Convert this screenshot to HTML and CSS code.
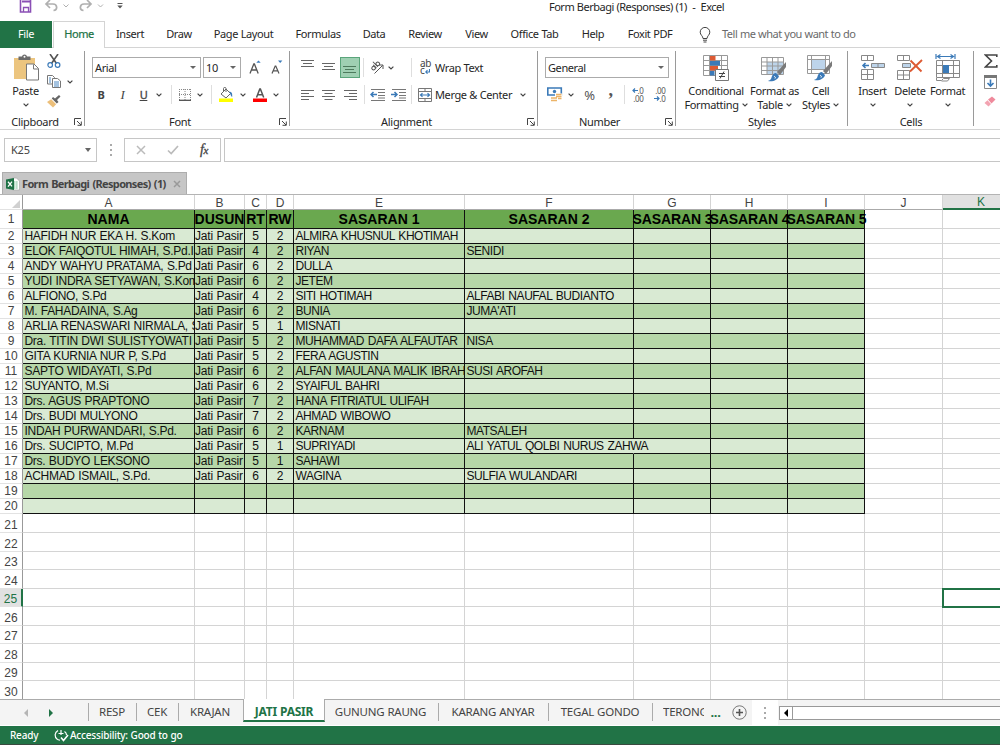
FILE: index.html
```html
<!DOCTYPE html>
<html lang="en">
<head>
  <meta charset="UTF-8" />
  <title>Form Berbagi (Responses) (1) - Excel</title>
  <link rel="stylesheet" href="styles.css">
</head>
<body>

  <!-- shared icons -->
  <svg class="defs" width="0" height="0">
    <symbol id="chev" viewBox="0 0 6 4"><path d="M.6 .6 3 3 5.4 .6" fill="none" stroke="#444" stroke-width="1.2"/></symbol>
    <symbol id="launch" viewBox="0 0 8 8"><path d="M.5 7V.5H7M3 3l4 4M7.3 3.5v3.8H3.5" fill="none" stroke="#444"/></symbol>
    <symbol id="brush" viewBox="0 0 20 20"><path d="M19 0v5l-6 8-3-3z" fill="#7a7a7a"/><path d="M9 11l3 3c-1 4-6 6-11 5 3-1 3-2 4-5 1-2 2-3 4-3z" fill="#3b7ab8"/><path d="M7 14.500c1 0 2 1 1 2" fill="none" stroke="#fff"/></symbol>
  </svg>

  <div class="titlebar">
    <svg class="quick" width="130" height="14" viewBox="0 0 130 14" fill="none">
      <path d="M20.500 0V12h10V0" stroke="#8a4fb5" stroke-width="1.600"/><path d="M22 1.500h8" stroke="#8a4fb5" stroke-width="2"/><path d="M23.500 12V7.500h5V12" stroke="#8a4fb5" stroke-width="1.300"/>
      <path d="M46 4h7c4.500 0 5 6 .5 6.500M50 0l-4 4 4 4" stroke="#b0b0b0" stroke-width="1.700"/>
      <path d="M63.500 4.500l2.500 2.500 2.500-2.500" stroke="#b0b0b0"/>
      <path d="M91 4h-7c-4.500 0-5 6-.5 6.500M87 0l4 4-4 4" stroke="#b0b0b0" stroke-width="1.700"/>
      <path d="M98 4.500l2.500 2.500 2.500-2.500" stroke="#b0b0b0"/>
      <path d="M117.500 3.500h5" stroke="#555"/><path d="M117.300 5.500h5.400L120 8.500z" fill="#555"/>
    </svg>
    <span class="window-title">Form Berbagi (Responses) (1)&nbsp; -&nbsp; Excel</span>
  </div>

  <div class="tabs">
    <span class="file">File</span>
    <span></span>
    <span class="home">Home</span>
    <span>Insert</span>
    <span>Draw</span>
    <span>Page Layout</span>
    <span>Formulas</span>
    <span>Data</span>
    <span>Review</span>
    <span>View</span>
    <span>Office Tab</span>
    <span>Help</span>
    <span>Foxit PDF</span>
    <span class="bulb"><svg width="12" height="16" viewBox="0 0 12 16" fill="none" stroke="#444"><path d="M4 11.500C4 9 1.200 8 1.200 5.200a4.600 4.600 0 0 1 9.600 0C10.800 8 8 9 8 11.500zM4 13.200h4M4.500 15h3"/></svg></span>
    <span class="tellme">Tell me what you want to do</span>
  </div>

  <div class="ribbon">
    <div class="group clipboard">
      <div class="tools">
        <div class="big paste">
          <svg width="26" height="28" viewBox="0 0 26 28"><path d="M0 4h21v21H0z" fill="#ecc57f"/><path d="M4.500 6V2.500h3.500C8.500-.2 12.500-.2 13 2.500h3.500V6z" fill="#6b6b6b"/><circle cx="10.500" cy="2.700" r="1" fill="#fff"/><path d="M12.500 10h7.500l4.500 4.500V26h-12z" fill="#fff" stroke="#777"/><path d="M19.500 10.500V15h5" fill="none" stroke="#777"/></svg>
          <span>Paste</span>
          <svg class="chev"><use href="#chev"/></svg>
        </div>
        <div class="stack">
          <svg width="14" height="14" viewBox="0 0 14 14" fill="none"><path d="M3 0l6.500 9.500M11 0L4.500 9.500" stroke="#555" stroke-width="1.600"/><circle cx="3.200" cy="11" r="2.300" stroke="#3b7ab8" stroke-width="1.200"/><circle cx="10.600" cy="11" r="2.300" stroke="#3b7ab8" stroke-width="1.200"/></svg>
          <span class="pair"><svg width="14" height="13" viewBox="0 0 14 13" fill="#fff" stroke="#777"><path d="M.5 .5h5l2 2V9h-7z"/><path d="M5.500 3.500h5l3 2.500v6.500h-8z"/><path d="M2 3h2M2 5h2M2 7h2M7 7h5M7 9h5M7 11h5" stroke="#4a86c0"/></svg>
          <svg class="chev"><use href="#chev"/></svg></span>
          <svg width="14" height="13" viewBox="0 0 14 13"><path d="M13.500 1.500L12 0 8 3.500 6 2 4.800 3.500l5 5L11.500 7 10 5z" fill="#666"/><path d="M4.200 4.200l5 5L6 12.500 0 7z" fill="#ecbf7a"/></svg>
        </div>
      </div>
      <div class="label">Clipboard</div>
      <svg class="launch"><use href="#launch"/></svg>
    </div>

    <div class="group font">
      <div class="font-row1">
        <div class="combo">Arial<i></i></div>
        <div class="combo">10<i></i></div>
        <svg width="12" height="15" viewBox="0 0 12 15"><path d="M1 13.500L4.800 4h.6l3.800 9.500M2.400 10h5.400" fill="none" stroke="#555" stroke-width="1.300"/><path d="M7.300 2.800L9.500 .4l2.200 2.400z" fill="#3b7ab8"/></svg>
        <svg width="12" height="15" viewBox="0 0 12 15"><path d="M1 13.500L4.200 6h.6l3.200 7.500M2.200 10.800h4.600" fill="none" stroke="#555" stroke-width="1.200"/><path d="M7 .5h4.400L9.200 2.900z" fill="#3b7ab8"/></svg>
      </div>
      <div class="font-row2">
        <b>B</b><i>I</i><u>U</u>
        <svg class="chev"><use href="#chev"/></svg>
        <span class="sep"></span>
        <svg width="12" height="12" viewBox="0 0 12 12" fill="none" stroke="#888"><path d="M.5 0v11M6 0v11M11.500 0v11M0 .5h12M0 5.500h12" stroke-dasharray="1 1"/><path d="M0 11.300h12" stroke="#444" stroke-width="1.200"/></svg>
        <svg class="chev"><use href="#chev"/></svg>
        <span class="sep"></span>
        <svg width="14" height="15" viewBox="0 0 14 15"><path d="M2 7l5-5 4.500 4.500L7 11z" fill="#fff" stroke="#666"/><path d="M4.500 5V1.500c0-1.500 2.500-1.500 2.500 0V5" fill="none" stroke="#666"/><path d="M10 4.500c3 .2 3.500 2 3.200 5.500-1.500-.5-1.500-3-3.200-5.500z" fill="#3b7ab8"/><path d="M0 11.500h14V15H0z" fill="#ff0"/></svg>
        <svg class="chev"><use href="#chev"/></svg>
        <svg width="14" height="15" viewBox="0 0 14 15"><path d="M3.500 10.500L6.800 2h.6l3.300 8.500M4.800 7.700h4.600" fill="none" stroke="#555" stroke-width="1.500"/><path d="M0 11.500h14V15H0z" fill="#f00"/></svg>
        <svg class="chev"><use href="#chev"/></svg>
      </div>
      <div class="label">Font</div>
      <svg class="launch"><use href="#launch"/></svg>
    </div>

    <div class="group alignment">
      <div class="align-row">
        <svg width="13" height="15" viewBox="0 0 13 15"><path d="M0 .5h13M2 3.500h9M0 6.500h13" stroke="#666"/></svg>
        <svg width="13" height="11" viewBox="0 0 13 11"><path d="M0 1.500h13M2 4.500h9M0 7.500h13" stroke="#666"/></svg>
        <span class="pressed"><svg width="13" height="11" viewBox="0 0 13 11"><path d="M0 4.500h13M2 7.500h9M0 10.500h13" stroke="#4d7a5d"/></svg></span>
        <span class="sep"></span>
        <svg width="14" height="13" viewBox="0 0 14 13" fill="none" stroke="#555"><g transform="rotate(-45 5 5)"><circle cx="2.500" cy="5.500" r="1.800"/><path d="M4.500 3v4.500M6.500 .5v7"/><circle cx="8.400" cy="5.500" r="1.800"/></g><path d="M4.500 12.500l8-8M9 4h4v4"/></svg>
        <svg class="chev"><use href="#chev"/></svg>
        <span class="sep sep-wrap"></span>
        <span class="with-text"><span class="abc"><span>ab</span><span>c<svg width="5" height="5" viewBox="0 0 5 5"><path d="M4.500 0v3H1M2.500 1L.8 3l1.700 1.700" fill="none" stroke="#3b7ab8" stroke-width="1.100"/></svg></span></span><span>Wrap Text</span></span>
      </div>
      <div class="align-row second">
        <svg width="13" height="10" viewBox="0 0 13 10"><path d="M0 .5h13M0 3.500h8M0 6.500h13M0 9.500h8" stroke="#666"/></svg>
        <svg width="13" height="10" viewBox="0 0 13 10"><path d="M0 .5h13M2.500 3.500h8M0 6.500h13M2.500 9.500h8" stroke="#666"/></svg>
        <svg width="13" height="10" viewBox="0 0 13 10"><path d="M0 .5h13M5 3.500h8M0 6.500h13M5 9.500h8" stroke="#666"/></svg>
        <span class="sep"></span>
        <svg width="15" height="12" viewBox="0 0 15 12"><path d="M1 .5h14M8 3.500h7M8 6.500h7M1 11.500h14M8 9h7" stroke="#777"/><path d="M7 5.500H1M3.500 3L1 5.500 3.500 8" fill="none" stroke="#3b7ab8" stroke-width="1.500"/></svg>
        <svg width="15" height="12" viewBox="0 0 15 12"><path d="M1 .5h14M8 3.500h7M8 6.500h7M1 11.500h14M8 9h7" stroke="#777"/><path d="M0 5.500h6M3.500 3L6 5.500 3.500 8" fill="none" stroke="#3b7ab8" stroke-width="1.500"/></svg>
        <span class="sep sep-merge"></span>
        <span class="with-text"><svg width="14" height="14" viewBox="0 0 14 14" fill="none" stroke="#777"><path d="M.5 .5h13v13H.5zM0 3.500h14M0 10.500h14M7 0v3M7 11v3"/><path d="M3 7h8M4.500 5.300L2.500 7l2 1.700M9.500 5.300l2 1.700-2 1.700" stroke="#3b7ab8" stroke-width="1.200"/></svg><span>Merge &amp; Center</span></span>
        <svg class="chev"><use href="#chev"/></svg>
      </div>
      <div class="label">Alignment</div>
      <svg class="launch"><use href="#launch"/></svg>
    </div>

    <div class="group number">
      <div class="combo">General<i></i></div>
      <div class="number-row">
        <svg width="16" height="15" viewBox="0 0 16 15"><path d="M.8 1h13.500v7H.8z" fill="#fff" stroke="#3b7ab8" stroke-width="1.600"/><circle cx="7.500" cy="4.500" r="1.700" fill="#3b7ab8"/><path d="M8 6.500h7V15H3V10h5z" fill="#fff"/><path d="M9 7.500h5.500M9 9.500h5.500M4 11h6M4 13.500h6M11 11.500h3.500" stroke="#ecb468" stroke-width="1.300"/></svg>
        <svg class="chev"><use href="#chev"/></svg>
        <span class="pct">%</span>
        <span class="comma">,</span>
        <span class="sep"></span>
        <span class="dec"><span><svg width="6" height="5" viewBox="0 0 6 5"><path d="M6 2.500H1M3 .5l-2 2 2 2" fill="none" stroke="#3b7ab8" stroke-width="1.200"/></svg>.0</span><span>.00</span></span>
        <span class="dec"><span>.00</span><span><svg width="6" height="5" viewBox="0 0 6 5"><path d="M0 2.500h5M3 .5l2 2-2 2" fill="none" stroke="#3b7ab8" stroke-width="1.200"/></svg>.0</span></span>
      </div>
      <div class="label">Number</div>
      <svg class="launch"><use href="#launch"/></svg>
    </div>

    <div class="group styles">
      <div class="tools">
        <div class="big">
          <svg width="27" height="28" viewBox="0 0 27 28"><path d="M.5 1.500h24v20H.5z" fill="#fff" stroke="#999"/><path d="M0 6.500h25M0 11.500h25M0 16.500h25M6.500 1v21M18.500 1v21" stroke="#999"/><path d="M7 2h5.500v4.500H7zM7 12h8v4.500H7z" fill="#dd5a33"/><path d="M7 7h10v4.500H7zM7 17h4.500v4.500H7z" fill="#3b7ab8"/><path d="M12.500 15.500h13v11h-13z" fill="#fff" stroke="#777"/><path d="M16 19.500h6M16 22.500h6M21 17.500l-4 7" stroke="#444"/></svg>
          <span>Conditional</span>
          <span>Formatting <svg class="chev"><use href="#chev"/></svg></span>
        </div>
        <div class="big">
          <svg width="27" height="28" viewBox="0 0 27 28"><path d="M.5 3.500h22v17H.5z" fill="#fff" stroke="#999"/><path d="M6 8h16v12H6z" fill="#bdd4ea"/><path d="M0 8h23M0 12h23M0 16.500h23M6 3v18M11.500 3v18M17 3v18" stroke="#999"/><use href="#brush" x="6" y="8" width="20" height="20"/></svg>
          <span>Format as</span>
          <span>Table <svg class="chev"><use href="#chev"/></svg></span>
        </div>
        <div class="big">
          <svg width="27" height="28" viewBox="0 0 27 28"><path d="M.5 1.500h22v18H.5z" fill="#fff" stroke="#999"/><path d="M5 6h13v9H5z" fill="#bdd4ea"/><path d="M0 5.500h23M0 15.500h23M4.500 1v19M18.500 1v19" stroke="#999"/><use href="#brush" x="6" y="7" width="20" height="20"/></svg>
          <span>Cell</span>
          <span>Styles <svg class="chev"><use href="#chev"/></svg></span>
        </div>
      </div>
      <div class="label">Styles</div>
    </div>

    <div class="group cells">
      <div class="tools">
        <div class="big">
          <svg width="24" height="28" viewBox="0 0 24 28" fill="#fff" stroke="#888"><path d="M.5 1.500h12v5H.5zM6.500 1.500v5M.5 15.500h12v10H.5zM.5 20.500h12M6.500 15.500v10"/><path d="M10.500 9.500h13v4h-13zM17 9v4" fill="#bdd4ea"/><path d="M8 11.500H2M4.500 9L2 11.500 4.500 14" fill="none" stroke="#3b7ab8" stroke-width="1.600"/></svg>
          <span>Insert</span>
          <svg class="chev"><use href="#chev"/></svg>
        </div>
        <div class="big">
          <svg width="26" height="28" viewBox="0 0 26 28" fill="#fff" stroke="#888"><path d="M.5 1.500h12v5H.5zM6.500 1.500v5M.5 16.500h12v9H.5zM.5 21h12M6.500 16.500v9"/><path d="M5.500 9.500h8v4h-8z" fill="#bdd4ea"/><path d="M13.500 6.500l11 11M25 6L13 17.500" fill="none" stroke="#dd5a33" stroke-width="1.900"/></svg>
          <span>Delete</span>
          <svg class="chev"><use href="#chev"/></svg>
        </div>
        <div class="big">
          <svg width="26" height="28" viewBox="0 0 26 28" fill="#fff" stroke="#888"><path d="M1.500 6.500h23v17h-23zM1 11.500h24M1 19.500h24M7.500 6v18M18.500 6v18"/><path d="M8 11h6v8H8z" fill="#3b7ab8" stroke="none"/><path d="M1.500 24v2.500h5l2-2h6l-2 2.500h-6"/><path d="M1 0v5M20 0v5M3 2.500h15M5.500 .5l-3 2 3 2M15.500 .5l3 2-3 2" fill="none" stroke="#3b7ab8" stroke-width="1.200"/></svg>
          <span>Format</span>
          <svg class="chev"><use href="#chev"/></svg>
        </div>
      </div>
      <div class="label">Cells</div>
    </div>

    <div class="group editing">
      <svg width="14" height="14" viewBox="0 0 14 14"><path d="M12.800 3V1H1.500l6 6-6 6h11.300v-2" fill="none" stroke="#444" stroke-width="1.600"/></svg>
      <svg width="13" height="14" viewBox="0 0 13 14"><path d="M.5 .5h12v13H.5z" fill="#fff" stroke="#888"/><path d="M0 0h13v3H0z" fill="#777"/><path d="M6.500 4.500V11M3.500 8l3 3 3-3" fill="none" stroke="#3b7ab8" stroke-width="1.600"/></svg>
      <svg width="12" height="11" viewBox="0 0 12 11"><path d="M4 3.500L8 .5l3.500 3-4 4z" fill="#ef8a9c"/><path d="M3.500 4.200L7 8l-2.500 2.500L.5 7z" fill="#f3a3b1"/></svg>
    </div>
  </div>

  <div class="formula-bar">
    <div class="name-box">K25<i></i></div>
    <div class="dots"><i></i><i></i><i></i></div>
    <div class="fx-box">
      <svg width="10" height="10" viewBox="0 0 10 10"><path d="M1 1l8 8M9 1L1 9" stroke="#bbb" stroke-width="1.500"/></svg>
      <svg width="12" height="10" viewBox="0 0 12 10"><path d="M1 5.500L4.200 8.500 11 1" fill="none" stroke="#bbb" stroke-width="1.700"/></svg>
      <span class="fx">f<small>x</small></span>
    </div>
    <div class="input"></div>
  </div>

  <div class="doc-tab">
    <svg width="14" height="14" viewBox="0 0 14 14"><path d="M6.500 1h4l3 3v9h-7z" fill="#fff" stroke="#aaa" stroke-width=".7"/><path d="M8 5h4M8 7h4M8 9h4M8 11h4" stroke="#6db58a" stroke-dasharray="1.500 .6"/><path d="M0 2.500L8 1v12l-8-1.500z" fill="#1e7145"/><path d="M2 4.800l4 4.600M6 4.600L2 9.600" stroke="#fff" stroke-width="1.300"/></svg>
    <span>Form Berbagi (Responses) (1)</span>
    <svg width="8" height="8" viewBox="0 0 8 8"><path d="M1 1l6 6M7 1L1 7" stroke="#999" stroke-width="1.500"/></svg>
  </div>

  <table class="sheet">
    <colgroup><col class="n"><col class="a"><col class="b"><col class="c"><col class="d"><col class="e"><col class="f"><col class="g"><col class="g"><col class="g"><col class="j"><col class="k"></colgroup>
    <tr class="letters"><th class="corner"><svg width="8" height="8" viewBox="0 0 8 8"><path d="M8 0v8H0z" fill="#d0d0d0"/></svg></th><th>A</th><th>B</th><th>C</th><th>D</th><th>E</th><th>F</th><th>G</th><th>H</th><th>I</th><th>J</th><th class="current">K</th></tr>
    <tr class="head"><th>1</th><td><p>NAMA</p></td><td><p>DUSUN</p></td><td><p>RT</p></td><td><p>RW</p></td><td><p>SASARAN 1</p></td><td><p>SASARAN 2</p></td><td><p>SASARAN 3</p></td><td><p>SASARAN 4</p></td><td><p>SASARAN 5</p></td><td></td><td></td></tr>
    <tr class="light"><th>2</th><td>HAFIDH NUR EKA H. S.Kom</td><td>Jati Pasir</td><td>5</td><td>2</td><td>ALMIRA KHUSNUL KHOTIMAH</td><td></td><td></td><td></td><td></td><td></td><td></td></tr>
    <tr class="dark"><th>3</th><td>ELOK FAIQOTUL HIMAH, S.Pd.I</td><td>Jati Pasir</td><td>4</td><td>2</td><td>RIYAN</td><td>SENIDI</td><td></td><td></td><td></td><td></td><td></td></tr>
    <tr class="light"><th>4</th><td>ANDY WAHYU PRATAMA, S.Pd</td><td>Jati Pasir</td><td>6</td><td>2</td><td>DULLA</td><td></td><td></td><td></td><td></td><td></td><td></td></tr>
    <tr class="dark"><th>5</th><td>YUDI INDRA SETYAWAN, S.Kom</td><td>Jati Pasir</td><td>6</td><td>2</td><td>JETEM</td><td></td><td></td><td></td><td></td><td></td><td></td></tr>
    <tr class="light"><th>6</th><td>ALFIONO, S.Pd</td><td>Jati Pasir</td><td>4</td><td>2</td><td>SITI HOTIMAH</td><td>ALFABI NAUFAL BUDIANTO</td><td></td><td></td><td></td><td></td><td></td></tr>
    <tr class="dark"><th>7</th><td>M. FAHADAINA, S.Ag</td><td>Jati Pasir</td><td>6</td><td>2</td><td>BUNIA</td><td>JUMA'ATI</td><td></td><td></td><td></td><td></td><td></td></tr>
    <tr class="light"><th>8</th><td>ARLIA RENASWARI NIRMALA, S.Pd</td><td>Jati Pasir</td><td>5</td><td>1</td><td>MISNATI</td><td></td><td></td><td></td><td></td><td></td><td></td></tr>
    <tr class="dark"><th>9</th><td>Dra. TITIN DWI SULISTYOWATI</td><td>Jati Pasir</td><td>5</td><td>2</td><td>MUHAMMAD DAFA ALFAUTAR</td><td>NISA</td><td></td><td></td><td></td><td></td><td></td></tr>
    <tr class="light"><th>10</th><td>GITA KURNIA NUR P, S.Pd</td><td>Jati Pasir</td><td>5</td><td>2</td><td>FERA AGUSTIN</td><td></td><td></td><td></td><td></td><td></td><td></td></tr>
    <tr class="dark"><th>11</th><td>SAPTO WIDAYATI, S.Pd</td><td>Jati Pasir</td><td>6</td><td>2</td><td>ALFAN MAULANA MALIK IBRAHIM</td><td>SUSI AROFAH</td><td></td><td></td><td></td><td></td><td></td></tr>
    <tr class="light"><th>12</th><td>SUYANTO, M.Si</td><td>Jati Pasir</td><td>6</td><td>2</td><td>SYAIFUL BAHRI</td><td></td><td></td><td></td><td></td><td></td><td></td></tr>
    <tr class="dark"><th>13</th><td>Drs. AGUS PRAPTONO</td><td>Jati Pasir</td><td>7</td><td>2</td><td>HANA FITRIATUL ULIFAH</td><td></td><td></td><td></td><td></td><td></td><td></td></tr>
    <tr class="light"><th>14</th><td>Drs. BUDI MULYONO</td><td>Jati Pasir</td><td>7</td><td>2</td><td>AHMAD WIBOWO</td><td></td><td></td><td></td><td></td><td></td><td></td></tr>
    <tr class="dark"><th>15</th><td>INDAH PURWANDARI, S.Pd.</td><td>Jati Pasir</td><td>6</td><td>2</td><td>KARNAM</td><td>MATSALEH</td><td></td><td></td><td></td><td></td><td></td></tr>
    <tr class="light"><th>16</th><td>Drs. SUCIPTO, M.Pd</td><td>Jati Pasir</td><td>5</td><td>1</td><td>SUPRIYADI</td><td class="spill"><span>ALI YATUL QOLBI NURUS ZAHWA</span></td><td></td><td></td><td></td><td></td><td></td></tr>
    <tr class="dark"><th>17</th><td>Drs. BUDYO LEKSONO</td><td>Jati Pasir</td><td>5</td><td>1</td><td>SAHAWI</td><td></td><td></td><td></td><td></td><td></td><td></td></tr>
    <tr class="light"><th>18</th><td>ACHMAD ISMAIL, S.Pd.</td><td>Jati Pasir</td><td>6</td><td>2</td><td>WAGINA</td><td>SULFIA WULANDARI</td><td></td><td></td><td></td><td></td><td></td></tr>
    <tr class="dark"><th>19</th><td></td><td></td><td></td><td></td><td></td><td></td><td></td><td></td><td></td><td></td><td></td></tr>
    <tr class="light"><th>20</th><td></td><td></td><td></td><td></td><td></td><td></td><td></td><td></td><td></td><td></td><td></td></tr>
    <tr class="empty tall"><th>21</th><td></td><td></td><td></td><td></td><td></td><td></td><td></td><td></td><td></td><td></td><td></td></tr>
    <tr class="empty tall"><th>22</th><td></td><td></td><td></td><td></td><td></td><td></td><td></td><td></td><td></td><td></td><td></td></tr>
    <tr class="empty"><th>23</th><td></td><td></td><td></td><td></td><td></td><td></td><td></td><td></td><td></td><td></td><td></td></tr>
    <tr class="empty tall"><th>24</th><td></td><td></td><td></td><td></td><td></td><td></td><td></td><td></td><td></td><td></td><td></td></tr>
    <tr class="empty"><th class="current">25</th><td></td><td></td><td></td><td></td><td></td><td></td><td></td><td></td><td></td><td></td><td class="selected"></td></tr>
    <tr class="empty tall"><th>26</th><td></td><td></td><td></td><td></td><td></td><td></td><td></td><td></td><td></td><td></td><td></td></tr>
    <tr class="empty"><th>27</th><td></td><td></td><td></td><td></td><td></td><td></td><td></td><td></td><td></td><td></td><td></td></tr>
    <tr class="empty tall"><th>28</th><td></td><td></td><td></td><td></td><td></td><td></td><td></td><td></td><td></td><td></td><td></td></tr>
    <tr class="empty"><th>29</th><td></td><td></td><td></td><td></td><td></td><td></td><td></td><td></td><td></td><td></td><td></td></tr>
    <tr class="empty tall"><th>30</th><td></td><td></td><td></td><td></td><td></td><td></td><td></td><td></td><td></td><td></td><td></td></tr>
  </table>

  <div class="sheet-tabs">
    <span class="nav"><i class="left"></i><i class="right"></i></span>
    <span>RESP</span>
    <span>CEK</span>
    <span class="last">KRAJAN</span>
    <span class="active">JATI PASIR</span>
    <span>GUNUNG RAUNG</span>
    <span>KARANG ANYAR</span>
    <span>TEGAL GONDO</span>
    <span class="cut">TERONG</span>
    <span class="more">...</span>
    <span class="add"><svg width="15" height="15" viewBox="0 0 15 15" fill="none" stroke="#777"><circle cx="7.500" cy="7.500" r="6.700"/><path d="M7.500 4v7M4 7.500h7" stroke="#555" stroke-width="1.600"/></svg></span>
    <span class="grip"><i></i><i></i><i></i></span>
    <div class="scroll"><i></i></div>
  </div>

  <div class="status">
    <span class="ready">Ready</span>
    <svg width="15" height="13" viewBox="0 0 15 13" fill="none" stroke="#fff" stroke-width="1.200"><path d="M4 1.500C.5 3.500 0 8 3.500 10.500l2.500.8M7 1v5M4.500 4.500h5M10.500 2.500c1.500 1 2 2 2 3.500"/><path d="M7 8.500l2.500 3L14 6" stroke-width="1.600"/></svg>
    <span class="access">Accessibility: Good to go</span>
  </div>

</body>
</html>
```
FILE: styles.css
```css
* { box-sizing: border-box; }
body { margin: 0; width: 1000px; height: 750px; overflow: hidden; background: #fff; font: 11px/14px "Noto Sans", "Open Sans", sans-serif; letter-spacing: -0.4px; word-spacing: 0.3px; color: #262626; }
svg { display: block; flex: none; }
.defs { position: absolute; }

/* title */
.titlebar { height: 21px; display: flex; }
.quick { width: 130px; margin-right: 419px; }
.window-title { line-height: 14px; white-space: nowrap; letter-spacing: -0.5px; }

/* ribbon tabs */
.tabs { height: 27px; display: grid; grid-template-columns: 52px 1px 52px 50px 48px 81px 68px 44px 58px 45px 71px 46px 68px 41px 1fr; border-bottom: 1px solid #d4d4d4; line-height: 26px; text-align: center; white-space: nowrap; }
.file { background: #217346; color: #fff; }
.home { height: 27px; background: #fff; border: 1px solid #d4d4d4; border-bottom: 0; color: #217346; line-height: 24px; -webkit-text-stroke: 0.2px #217346; }
.bulb { display: flex; align-items: center; justify-content: center; }
.tellme { text-align: left; margin-left: -3px; color: #6a6a6a; letter-spacing: -0.5px; }

/* ribbon */
.ribbon { height: 82px; display: flex; border-bottom: 1px solid #d4d4d4; }
.group { position: relative; flex: none; height: 78px; }
.group::after { content: ""; position: absolute; right: 0; top: 3px; width: 1px; height: 75px; background: #9a9a9a; }
.label { position: absolute; left: 0; right: 0; bottom: -3px; text-align: center; line-height: 14px; letter-spacing: -0.3px; }
.launch { position: absolute; right: 3px; bottom: 0; width: 8px; height: 8px; }
.chev { width: 6px; height: 4px; }
.sep { width: 1px; height: 19px; background: #dedede; }
.tools { display: flex; }
.big { display: flex; flex-direction: column; align-items: center; white-space: nowrap; letter-spacing: -0.35px; }
.big > svg:first-child { height: 28px; margin-bottom: 2px; }
.big > span { display: flex; align-items: center; gap: 3px; }
.big > .chev { margin-top: 5px; }
.combo { display: flex; align-items: center; justify-content: space-between; height: 21px; border: 1px solid #ababab; padding: 0 4px 0 2px; background: #fff; letter-spacing: -0.4px; }
.combo i { border: 3px solid transparent; border-top: 3px solid #666; border-bottom: 0; }
.name-box i { border: 3.5px solid transparent; border-top: 4px solid #666; border-bottom: 0; }

.clipboard { width: 85px; }
.clipboard .tools { padding: 6px 0 0 12px; }
.clipboard .label { right: 15px; }
.paste { width: 27px; }
.paste > svg:first-child { margin-left: 3px; }
.stack { display: flex; flex-direction: column; gap: 7px; margin-left: 8px; }
.pair { display: flex; align-items: center; gap: 6px; }

.font { width: 205px; padding: 9px 0 0 7px; }
.font .label { right: 15px; }
.font-row1 { display: grid; grid-template-columns: 109px 38px 12px 12px; column-gap: 2px; align-items: center; }
.font-row1 svg:nth-of-type(1) { margin-left: 6px; }
.font-row1 svg:nth-of-type(2) { margin-left: 14px; }
.font-row2 { display: grid; grid-template-columns: 18px 25px 17px 14px 11px 15px 16px 6px 24px 9px 25px 7px; height: 21px; margin-top: 6px; align-items: center; justify-items: center; color: #444; }
.font-row2 i { font-family: "Liberation Serif", serif; font-size: 13px; }
.font-row2 u { -webkit-text-stroke: 0.3px #444; }

.alignment { width: 248px; padding: 9px 0 0 7px; }
.alignment .label { right: 15px; }
.align-row { display: grid; grid-template-columns: 21px 21px 21px 6px 22px 5px 26px auto 12px; height: 21px; align-items: center; justify-items: center; justify-content: start; }
.align-row.second { grid-template-columns: 21px 21px 22px 6px 20px 22px 9px auto 22px; margin-top: 6px; }
.sep-wrap { margin-left: 10px; }
.sep-merge { margin-right: 5px; }
.pressed { display: flex; align-items: center; justify-content: center; width: 20px; height: 21px; background: #9fd0b3; border: 1px solid #5aa57b; }
.with-text { display: flex; align-items: center; gap: 3px; white-space: nowrap; }
.abc { width: 13px; margin-top: -2px; padding-left: 1px; font-size: 10px; line-height: 7px; color: #444; }
.abc > span { display: flex; align-items: center; gap: 1px; }
.abc svg { margin-top: 2px; }

.number { width: 138px; padding: 9px 7px 0 7px; }
.number .label { right: 15px; }
.number-row { display: grid; grid-template-columns: 20px 11px 27px 15px 13px 13px 31px; height: 21px; margin-top: 6px; align-items: center; justify-items: center; color: #555; }
.pct { font-size: 13px; }
.comma { font: bold 18px/8px "Liberation Serif", serif; margin-top: -10px; }
.dec { display: flex; flex-direction: column; align-items: flex-end; font-size: 8px; line-height: 8px; }
.dec span { display: flex; align-items: center; }

.styles { width: 172px; }
.styles .tools { display: grid; grid-template-columns: 80px 37px 55px; padding-top: 6px; justify-items: center; }
.styles .big { width: 0; }
.cells { width: 126px; }
.cells .tools { display: grid; grid-template-columns: 49px 26px 49px; padding-top: 6px; justify-items: center; }
.cells .big { width: 0; }
.editing { padding: 6px 0 0 10px; display: flex; flex-direction: column; gap: 7px; }
.editing::after { display: none; }

/* formula bar */
.formula-bar { display: flex; height: 24px; margin: 8px 0 10px; padding-left: 4px; color: #444; }
.name-box { display: flex; align-items: center; justify-content: space-between; width: 93px; border: 1px solid #c6c6c6; padding: 0 5px 0 6px; letter-spacing: -0.2px; }
.dots, .grip { display: flex; flex-direction: column; justify-content: center; align-items: center; gap: 3px; width: 27px; }
.dots i, .grip i { width: 2px; height: 2px; background: #aaa; }
.fx-box { display: flex; align-items: center; width: 97px; border: 1px solid #c6c6c6; padding-left: 11px; gap: 21px; }
.fx { font: italic 14px "Liberation Serif", serif; -webkit-text-stroke: 0.3px #444; }
.fx small { font-size: 11px; }
.input { flex: 1; margin-left: 3px; border: 1px solid #c6c6c6; border-right: 0; }

.doc-tab { display: flex; align-items: center; gap: 2px; width: 185px; height: 22px; margin: 0 0 0 2px; padding-left: 3px; background: #c6c6c6; border: 1px solid #adadad; border-bottom: 0; font-weight: bold; color: #444; white-space: nowrap; letter-spacing: -0.65px; word-spacing: 1px; }
.doc-tab svg:last-child { margin-left: 5px; }

/* sheet */
.sheet { width: 1020px; table-layout: fixed; border-collapse: separate; border-spacing: 0; border-top: 1px solid #b4b4b4; font: 12px/14px "Liberation Sans", Arial, sans-serif; letter-spacing: -0.45px; word-spacing: 1px; color: #111; }
.n { width: 23px; }
.a { width: 172px; }
.b { width: 50px; }
.c { width: 22px; }
.d { width: 27px; }
.e { width: 171px; }
.f { width: 169px; }
.g { width: 77px; }
.j { width: 78px; }
.k { width: 77px; }
.sheet th, .sheet td { padding: 0; height: 15px; border-right: 1px solid #d4d4d4; border-bottom: 1px solid #d4d4d4; font-weight: normal; white-space: nowrap; overflow: hidden; }
.sheet th { color: #444; font-size: 12px; letter-spacing: 0; }
.sheet th:first-child { border-right-color: #999; border-bottom-color: #e2e2e2; }
.letters th { border-bottom-color: #aaa; }
.sheet .letters th { padding-top: 2px; line-height: 12px; }
.letters .corner svg { margin: 1px 0 0 12px; }
.sheet .head th { height: 19px; }
.head td { font: bold 14px/18px "Liberation Sans", Arial, sans-serif; letter-spacing: 0; word-spacing: 0; }
.sheet .head td { overflow: visible; }
.head p { position: relative; margin: 0 -10px; text-align: center; color: #000; }
.head td:nth-child(n+8) p { margin-right: -11px; letter-spacing: -0.1px; }
.head td:nth-child(-n+10), .light td:nth-child(-n+10), .dark td:nth-child(-n+10) { border-color: #111; }
.head td:nth-child(-n+10) { background: #6aa84f; }
.light td:nth-child(-n+10) { background: #d9ead3; }
.dark td:nth-child(-n+10) { background: #b6d7a8; }
.light td, .dark td { padding-left: 1.5px !important; }
.light td:nth-child(2), .dark td:nth-child(2) { letter-spacing: -0.3px; word-spacing: 0.5px; }
.light td:nth-child(3), .dark td:nth-child(3) { padding-left: 0 !important; letter-spacing: -0.2px; word-spacing: 0.5px; }
.light td:nth-child(4), .light td:nth-child(5), .dark td:nth-child(4), .dark td:nth-child(5) { padding: 0 !important; text-align: center; letter-spacing: 0; }
.sheet .light .spill { overflow: visible; border-right-color: #d9ead3; }
.spill span { position: relative; }
.sheet .empty th, .sheet .empty td { height: 18px; line-height: 14px; }
.sheet .empty th { vertical-align: bottom; }
.sheet .tall th, .sheet .tall td { height: 19px; }
.sheet .current { background: #e1e1e1; color: #217346; }
.letters .current { border-bottom: 2px solid #217346; }
.sheet .letters .current { padding-top: 1px; }
.sheet .empty .current { border-right: 2px solid #217346; }
.selected { outline: 2px solid #217346; outline-offset: -1px; }

/* sheet tabs */
.sheet-tabs { display: flex; height: 27px; background: #f4f4f4; border-top: 1px solid #ababab; margin-top: -1px; font-size: 11.5px; line-height: 24px; letter-spacing: -0.25px; color: #444; white-space: nowrap; }
.sheet-tabs > span { position: relative; flex: none; text-align: center; }
.sheet-tabs > span:nth-child(-n+3)::after, .sheet-tabs > span:nth-child(6)::after, .sheet-tabs > span:nth-child(7)::after, .sheet-tabs > span:nth-child(8)::after { content: ""; position: absolute; right: 0; top: 3px; width: 1px; height: 18px; background: #ababab; }
.sheet-tabs > span:nth-child(2) { width: 48px; padding-right: 2px; }
.sheet-tabs > span:nth-child(3) { width: 42px; padding-right: 2px; }
.sheet-tabs > .last { width: 64px; padding-right: 2px; }
.nav { width: 89px; display: flex; align-items: center; padding-left: 24px; gap: 21px; height: 25px; }
.nav .left { border: 4px solid transparent; border-right-color: #b5b5b5; border-left: 0; }
.nav .right { border: 4px solid transparent; border-left-color: #217346; border-right: 0; }
.sheet-tabs > .active { width: 82px; height: 23px; margin-top: -1px; background: #fff; border: 1px solid #ababab; border-top: 0; border-bottom: 2px solid #217346; color: #217346; font-weight: bold; font-size: 12px; line-height: 25px; }
.sheet-tabs > span:nth-child(6) { width: 114px; padding-right: 3px; }
.sheet-tabs > span:nth-child(7) { width: 110px; padding-right: 2px; }
.sheet-tabs > span:nth-child(8) { width: 104px; padding-right: 2px; }
.sheet-tabs > .cut { width: 41px; margin-left: 10px; overflow: hidden; text-align: left; }
.more { width: 23px; color: #217346; font-weight: bold; font-size: 13px; }
.add { width: 25px; display: flex; align-items: center; justify-content: center; height: 25px; }
.sheet-tabs .grip { width: 26px; background: #fff; }
.scroll { flex: 1; height: 14px; margin-top: 6px; margin-left: 1px; border: 1px solid #999; border-right: 0; background: #fff; }
.scroll i { display: block; width: 13px; height: 12px; border-right: 1px solid #999; }
.scroll i::before { content: ""; display: inline-block; border: 4px solid transparent; border-right-color: #000; border-left: 0; margin: 2px 0 0 4px; vertical-align: top; }

/* status bar */
.status { display: flex; align-items: center; height: 20px; margin-top: -1px; background: #217346; border-top: 1px solid #fff; border-bottom: 1px solid #3a4a40; color: #fff; font-size: 10px; font-weight: 500; letter-spacing: -0.2px; padding-left: 10px; }
.ready { width: 44px; }
.access { margin-left: 1px; }
```
